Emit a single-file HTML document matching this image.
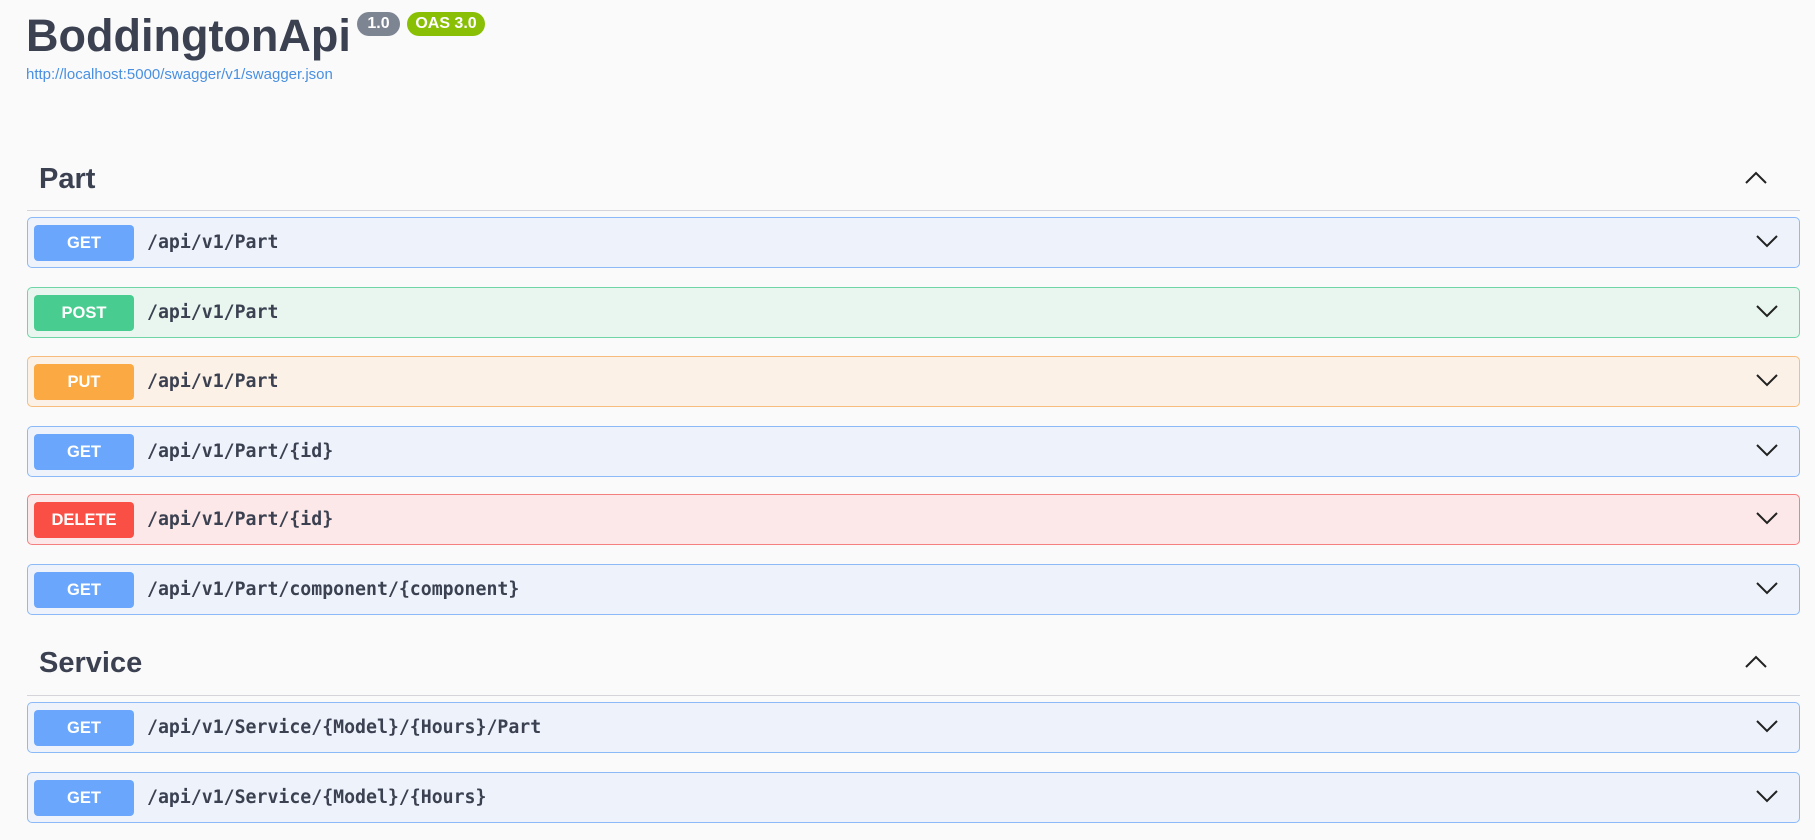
<!DOCTYPE html>
<html><head><meta charset="utf-8"><style>
body{margin:0;background:#fafafa;width:1815px;height:840px;overflow:hidden;position:relative;font-family:"Liberation Sans",sans-serif;color:#3b4151}
.t{position:absolute;left:26px;top:7px;font-size:45px;font-weight:bold;line-height:58px}
.b{position:absolute;top:12px;height:24px;line-height:24px;border-radius:14px;color:#fff;font-weight:bold;font-size:16px;text-align:center}
.u{position:absolute;left:26px;top:66px;font-size:15px;color:#4990e2}
.h{position:absolute;left:39px;font-size:29px;font-weight:bold;line-height:36px}
.l{position:absolute;left:27px;width:1773px;height:1px;background:#d3d5da}
.r{position:absolute;left:27px;width:1771px;height:49px;border:1px solid;border-radius:5px}
.m{position:absolute;left:6px;top:7px;width:100px;height:36px;line-height:36px;border-radius:4px;color:#fff;font-weight:bold;font-size:16.5px;text-align:center}
.p{position:absolute;left:119px;top:0;line-height:49px;font-family:"DejaVu Sans Mono",monospace;font-weight:bold;font-size:18.2px;color:#3b4151}
.c{position:absolute;right:20px;top:15px}
.g{background:#eef3fb;border-color:#8cb9f8}.g .m{background:#6aa7fc}
.po{background:#e8f6ef;border-color:#6fd5a6}.po .m{background:#49cc90}
.pu{background:#fcf1e6;border-color:#f8bc7c}.pu .m{background:#fba942}
.d{background:#fce8e8;border-color:#f57e7e}.d .m{background:#f94f45}
</style></head><body>
<div class="t">BoddingtonApi</div>
<div class="b" style="left:357px;width:43px;background:#7d8492">1.0</div>
<div class="b" style="left:407px;width:78px;background:#89bf04">OAS 3.0</div>
<div class="u">http://localhost:5000/swagger/v1/swagger.json</div>

<div class="h" style="top:161px">Part</div>
<svg style="position:absolute;left:1744px;top:171px" width="24" height="14"><path d="M2 12L12 2L22 12" fill="none" stroke="#222" stroke-width="2"/></svg>
<div class="l" style="top:210px"></div>

<div class="r g" style="top:217px"><div class="m">GET</div><div class="p">/api/v1/Part</div><svg class="c" width="24" height="16"><path d="M2 3L12 13L22 3" fill="none" stroke="#222" stroke-width="2"/></svg></div>
<div class="r po" style="top:287px"><div class="m">POST</div><div class="p">/api/v1/Part</div><svg class="c" width="24" height="16"><path d="M2 3L12 13L22 3" fill="none" stroke="#222" stroke-width="2"/></svg></div>
<div class="r pu" style="top:356px"><div class="m">PUT</div><div class="p">/api/v1/Part</div><svg class="c" width="24" height="16"><path d="M2 3L12 13L22 3" fill="none" stroke="#222" stroke-width="2"/></svg></div>
<div class="r g" style="top:426px"><div class="m">GET</div><div class="p">/api/v1/Part/{id}</div><svg class="c" width="24" height="16"><path d="M2 3L12 13L22 3" fill="none" stroke="#222" stroke-width="2"/></svg></div>
<div class="r d" style="top:494px"><div class="m">DELETE</div><div class="p">/api/v1/Part/{id}</div><svg class="c" width="24" height="16"><path d="M2 3L12 13L22 3" fill="none" stroke="#222" stroke-width="2"/></svg></div>
<div class="r g" style="top:564px"><div class="m">GET</div><div class="p">/api/v1/Part/component/{component}</div><svg class="c" width="24" height="16"><path d="M2 3L12 13L22 3" fill="none" stroke="#222" stroke-width="2"/></svg></div>

<div class="h" style="top:645px">Service</div>
<svg style="position:absolute;left:1744px;top:655px" width="24" height="14"><path d="M2 12L12 2L22 12" fill="none" stroke="#222" stroke-width="2"/></svg>
<div class="l" style="top:695px"></div>

<div class="r g" style="top:702px"><div class="m">GET</div><div class="p">/api/v1/Service/{Model}/{Hours}/Part</div><svg class="c" width="24" height="16"><path d="M2 3L12 13L22 3" fill="none" stroke="#222" stroke-width="2"/></svg></div>
<div class="r g" style="top:772px"><div class="m">GET</div><div class="p">/api/v1/Service/{Model}/{Hours}</div><svg class="c" width="24" height="16"><path d="M2 3L12 13L22 3" fill="none" stroke="#222" stroke-width="2"/></svg></div>
</body></html>
